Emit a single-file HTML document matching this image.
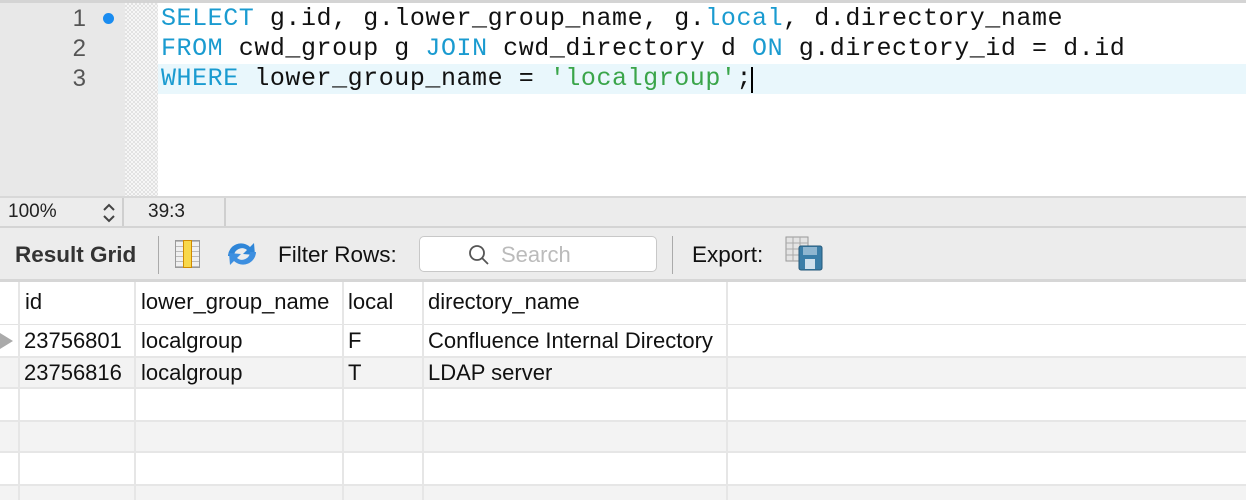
<!DOCTYPE html><html><head><style>
*{margin:0;padding:0;box-sizing:border-box}
body{width:1246px;height:500px;overflow:hidden;background:#fff;font-family:"Liberation Sans",sans-serif;position:relative}
.a{position:absolute}
.code{font-family:"Liberation Mono",monospace;font-size:25px;letter-spacing:0.55px;white-space:pre;color:#111;line-height:30px}
.kw{color:#1a9bd0}.st{color:#3aa54a}
.ln{font-family:"Liberation Sans",sans-serif;font-size:24px;color:#555;width:86px;text-align:right;line-height:30px}
.cell{position:absolute;font-size:22px;color:#111;line-height:32px}
.vl{position:absolute;top:282px;bottom:0;width:2px;background:#e6e6e6}
</style></head><body>
<div class="a" style="left:0;top:0;width:1246px;height:3px;background:#d4d4d4"></div>
<div class="a" style="left:0;top:3px;width:125px;height:194px;background:#e8e8e8"></div>
<div class="a" style="left:125px;top:3px;width:33px;height:194px;background-color:#f0f0f0;background-image:repeating-conic-gradient(#e2e2e2 0 25%,#f6f6f6 0 50%);background-size:4px 4px"></div>
<div class="a" style="left:158px;top:64px;width:1088px;height:30px;background:#e9f7fc"></div>
<div class="a ln" style="left:0;top:4px">1<br>2<br>3</div>
<div class="a" style="left:103px;top:13px;width:11px;height:11px;border-radius:50%;background:#1a8cf0"></div>
<div class="a code" style="left:161px;top:4px"><span class="kw">SELECT</span> g.id, g.lower_group_name, g.<span class="kw">local</span>, d.directory_name
<span class="kw">FROM</span> cwd_group g <span class="kw">JOIN</span> cwd_directory d <span class="kw">ON</span> g.directory_id = d.id
<span class="kw">WHERE</span> lower_group_name = <span class="st">'localgroup'</span>;</div>
<div class="a" style="left:751px;top:67px;width:2px;height:26px;background:#000"></div>
<div class="a" style="left:0;top:196px;width:1246px;height:2px;background:#d8d8d8"></div>
<div class="a" style="left:0;top:198px;width:1246px;height:30px;background:#ececec"></div>
<div class="a" style="left:8px;top:201px;font-size:19px;color:#222">100%</div>
<svg class="a" style="left:100px;top:201px" width="18" height="24" viewBox="0 0 18 24"><path d="M4 9 L9 4 L14 9 M4 15 L9 20 L14 15" fill="none" stroke="#444" stroke-width="2"/></svg>
<div class="a" style="left:122px;top:198px;width:2px;height:28px;background:#cfcfcf"></div>
<div class="a" style="left:148px;top:201px;font-size:19px;color:#222">39:3</div>
<div class="a" style="left:224px;top:198px;width:2px;height:28px;background:#cfcfcf"></div>
<div class="a" style="left:0;top:226px;width:1246px;height:2px;background:#d4d4d4"></div>
<div class="a" style="left:0;top:228px;width:1246px;height:52px;background:#ececec"></div>
<div class="a" style="left:15px;top:242px;font-size:22.5px;font-weight:bold;color:#333">Result Grid</div>
<div class="a" style="left:158px;top:236px;width:1px;height:38px;background:#aaa"></div>
<div class="a" style="left:175px;top:240px;width:25px;height:28px;background:repeating-linear-gradient(#bbb 0 1px,#f0f0f0 1px 5px);border:1px solid #999"></div>
<div class="a" style="left:183px;top:240px;width:9px;height:28px;background:#f8d84a;border:1px solid #d08a00"></div>
<svg class="a" style="left:224px;top:240px" width="36" height="28" viewBox="0 0 36 28"><path d="M4 16 A13 13 0 0 1 26 7 L30 3 L31 15 L19 14 L23 10 A8 8 0 0 0 10 16 Z" fill="#2f86d8"/><path d="M32 12 A13 13 0 0 1 10 21 L6 25 L5 13 L17 14 L13 18 A8 8 0 0 0 26 12 Z" fill="#3d8fe0"/></svg>
<div class="a" style="left:278px;top:242px;font-size:22.5px;color:#111">Filter Rows:</div>
<div class="a" style="left:419px;top:236px;width:238px;height:36px;background:#fff;border:1px solid #c8c8c8;border-radius:5px"></div>
<svg class="a" style="left:467px;top:243px" width="24" height="24" viewBox="0 0 24 24"><circle cx="10" cy="10" r="7" fill="none" stroke="#555" stroke-width="1.8"/><path d="M15 15 L21 21" stroke="#555" stroke-width="1.8"/></svg>
<div class="a" style="left:501px;top:242px;font-size:22px;color:#bbb">Search</div>
<div class="a" style="left:672px;top:236px;width:1px;height:38px;background:#aaa"></div>
<div class="a" style="left:692px;top:242px;font-size:22.5px;color:#111">Export:</div>
<svg class="a" style="left:785px;top:236px" width="40" height="36" viewBox="0 0 40 36"><rect x="1" y="1" width="22" height="24" fill="#e4e4e4" stroke="#999"/><path d="M1 7H23M1 13H23M1 19H23M8 1V25M15 1V25" stroke="#aaa"/><rect x="14" y="10" width="23" height="24" rx="2" fill="#3b7ea8" stroke="#25597a"/><rect x="18" y="11" width="14" height="8" fill="#8fb6d0"/><rect x="20" y="23" width="10" height="10" fill="#cfe0ec"/></svg>
<div class="a" style="left:0;top:279px;width:1246px;height:3px;background:#d6d6d6"></div>
<div class="a" style="left:0;top:324px;width:1246px;height:1px;background:#e3e3e3"></div>
<div class="a" style="left:0;top:356px;width:1246px;height:33px;background:#f3f3f3;border-top:2px solid #e6e6e6;border-bottom:2px solid #e6e6e6"></div>
<div class="a" style="left:0;top:420px;width:1246px;height:33px;background:#f3f3f3;border-top:2px solid #e6e6e6;border-bottom:2px solid #e6e6e6"></div>
<div class="a" style="left:0;top:484px;width:1246px;height:16px;background:#f3f3f3;border-top:2px solid #e6e6e6"></div>
<div class="vl" style="left:18px"></div><div class="vl" style="left:134px"></div><div class="vl" style="left:342px"></div><div class="vl" style="left:422px"></div><div class="vl" style="left:726px"></div>
<svg class="a" style="left:0;top:333px" width="14" height="16"><path d="M0 0 L13 8 L0 16 Z" fill="#aaa"/></svg>
<div class="cell" style="left:25px;top:286px">id</div>
<div class="cell" style="left:141px;top:286px">lower_group_name</div>
<div class="cell" style="left:348px;top:286px">local</div>
<div class="cell" style="left:428px;top:286px">directory_name</div>
<div class="cell" style="left:24px;top:325px">23756801</div>
<div class="cell" style="left:141px;top:325px">localgroup</div>
<div class="cell" style="left:348px;top:325px">F</div>
<div class="cell" style="left:428px;top:325px">Confluence Internal Directory</div>
<div class="cell" style="left:24px;top:357px">23756816</div>
<div class="cell" style="left:141px;top:357px">localgroup</div>
<div class="cell" style="left:348px;top:357px">T</div>
<div class="cell" style="left:428px;top:357px">LDAP server</div>
</body></html>
